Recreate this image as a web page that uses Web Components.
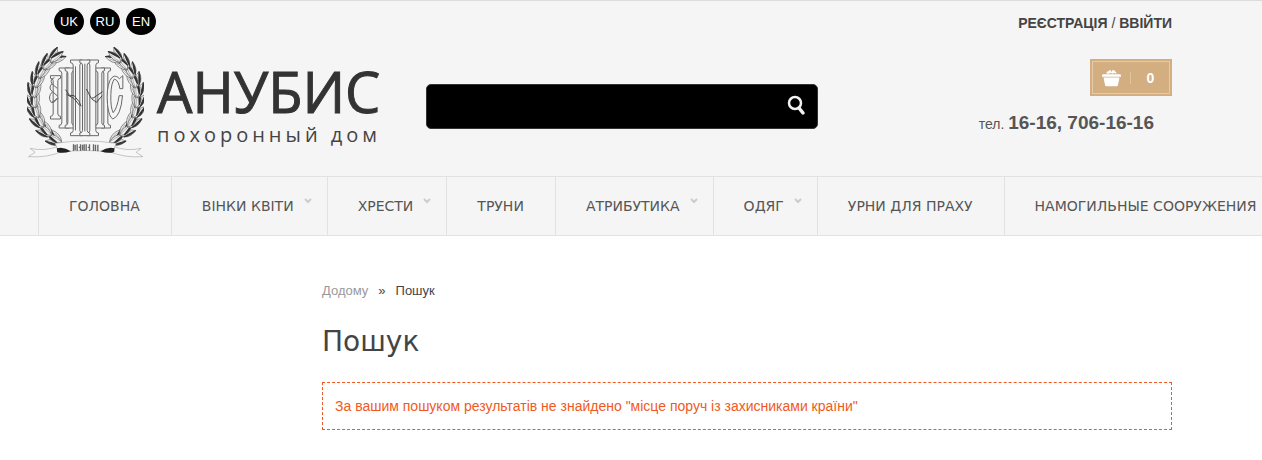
<!DOCTYPE html>
<html lang="uk">
<head>
<meta charset="utf-8">
<meta name="viewport" content="width=device-width, initial-scale=1">
<title>Пошук</title>
<style>
  body {
    margin: 0;
    background: #fff;
    color: #444;
    font: 14px/20px "Liberation Sans", Arial, sans-serif;
    --panel: #f5f5f5;
    --line: #e2e2e2;
    --gold: #d3ae80;
    --accent: #f05a22;
    --menu-font: "DejaVu Sans", Verdana, sans-serif;
  }
</style>
</head>
<body>
<anubis-header>
  <anubis-langs slot="langs"></anubis-langs>
  <anubis-logo slot="logo"></anubis-logo>
  <anubis-search slot="search"></anubis-search>
  <anubis-account slot="account"></anubis-account>
</anubis-header>
<anubis-menu>
  <anubis-menu-item>ГОЛОВНА</anubis-menu-item>
  <anubis-menu-item dropdown>ВІНКИ КВІТИ</anubis-menu-item>
  <anubis-menu-item dropdown>ХРЕСТИ</anubis-menu-item>
  <anubis-menu-item>ТРУНИ</anubis-menu-item>
  <anubis-menu-item dropdown>АТРИБУТИКА</anubis-menu-item>
  <anubis-menu-item dropdown>ОДЯГ</anubis-menu-item>
  <anubis-menu-item>УРНИ ДЛЯ ПРАХУ</anubis-menu-item>
  <anubis-menu-item>НАМОГИЛЬНЫЕ СООРУЖЕНИЯ</anubis-menu-item>
</anubis-menu>
<anubis-page>
  <anubis-crumbs slot="crumbs"></anubis-crumbs>
  <span slot="title">Пошук</span>
  <anubis-alert>За вашим пошуком результатів не знайдено "місце поруч із захисниками країни"</anubis-alert>
</anubis-page>

<script>
const define = (name, html) => {
  customElements.define(name, class extends HTMLElement {
    constructor() {
      super();
      this.attachShadow({ mode: "open" }).innerHTML = html;
    }
  });
};

define("anubis-header", `
  <style>
    :host { display: block; background: var(--panel); border-top: 1px solid #dcdcdc; }
    header {
      display: grid;
      grid-template-columns: 353px minmax(0, 392px) minmax(200px, 1fr);
      column-gap: 46px;
      padding: 7px 90px 17px 27px;
    }
    .brand { display: flex; flex-direction: column; gap: 12px; }
    .search { padding-top: 76px; }
  </style>
  <header>
    <div class="brand"><slot name="langs"></slot><slot name="logo"></slot></div>
    <div class="search"><slot name="search"></slot></div>
    <slot name="account"></slot>
  </header>
`);

define("anubis-langs", `
  <style>
    :host { display: flex; gap: 6px; padding-left: 27px; }
    a {
      width: 30px;
      border-radius: 50%;
      background: #000;
      color: #fff;
      font-size: 13px;
      line-height: 27px;
      text-align: center;
      text-decoration: none;
    }
  </style>
  <a href="#uk">UK</a><a href="#ru">RU</a><a href="#en">EN</a>
`);

// Leaves run along a bezier stem from the ribbon up to the tip
const laurel = () => {
  const p = [[126, 428], [22, 372], [24, 248], [92, 188]];
  const at = (t, k) => {
    const s = 1 - t;
    return s * s * s * p[0][k] + 3 * s * s * t * p[1][k] + 3 * s * t * t * p[2][k] + t * t * t * p[3][k];
  };
  let out = "";
  for (let i = 0; i < 10; i++) {
    const t = i / 9;
    const x = at(t, 0), y = at(t, 1);
    const dir = Math.atan2(at(t + .02, 1) - y, at(t + .02, 0) - x) * 180 / Math.PI;
    for (const side of [-25, 20, 0]) {
      const turn = (dir + side).toFixed(1);
      out += `<g transform="translate(${x.toFixed(1)} ${y.toFixed(1)}) rotate(${turn})">
        <path d="M0 0Q22 -22 50 0Q22 16 0 0Z" fill="#eee" stroke="#666" stroke-width="2"/>
        <path d="M10 -8Q28 -12 50 0Q32 -3 10 -8Z" fill="#222" stroke="#333" stroke-width="3"/>
        <path d="M4 1Q20 3 36 2" fill="none" stroke="#999" stroke-width="2"/></g>`;
    }
  }
  return out;
};

const pillar = (x, y, w, h) => `
  <path d="M${x} ${y}h${w}v8q-7 0 -8 7v${h - 30}q1 7 8 7v8h${-w}v-8q7 0 8 -7v${30 - h}q-1 -7 -8 -7z"/>`;

define("anubis-logo", `
  <style>
    :host { display: block; }
    a { display: flex; gap: 13px; color: #333; text-decoration: none; }
    svg { flex: none; width: 117px; height: 112px; }
    .words { display: flex; flex-direction: column; padding-top: 13px; white-space: nowrap; }
    strong { font: 500 56px/62px "Open Sans", sans-serif; -webkit-text-stroke: 1px #333; }
    small { font: 500 20px/26px "Open Sans", sans-serif; letter-spacing: 4px; color: #444; }
  </style>
  <a href="#home">
    <svg viewBox="22 142 350 336" aria-hidden="true">
      <g>${laurel()}</g>
      <g transform="translate(395 0) scale(-1 1)">${laurel()}</g>
      <g fill="#f5f5f5" stroke="#686868" stroke-width="3" stroke-linejoin="round">
        ${pillar(92, 228, 30, 130)}
        ${pillar(244, 205, 28, 180)}
        ${pillar(226, 205, 28, 180)}
        ${pillar(118, 205, 31, 180)}
        ${pillar(136, 205, 28, 180)}
        ${pillar(152, 181, 36, 227)}
        ${pillar(202, 181, 34, 227)}
        ${pillar(180, 181, 30, 227)}
        <path d="M309 267V228L299 237Q282 219 270 243Q259 270 263 314Q267 352 279 358Q303 350 308 288H298Q292 326 280 339Q272 324 273 285Q274 249 284 238Q297 243 300 267Z"/>
        <path d="M104 234q-15 5 -8 18q-12 14 2 24q-16 16 -4 32q12 3 16 -12M96 252l16 14M98 276l16 14M96 308l20 -13" fill="none"/>
        <path d="M195 192V395M167 200V392" fill="none"/>
        <path d="M137 270l12 17l14 1l15 18l6 14M140 284l22 12l18 22M200 268l14 28l8 -2l26 -18M216 298l14 10l17 -20" fill="none" stroke="#444"/>
      </g>
      <g fill="#f7f7f7" stroke="#aaa" stroke-width="2">
        <path d="M116 440Q74 456 31 446L46 458L26 471Q82 475 128 455Z"/>
        <path d="M279 440Q321 456 364 446L349 458L369 471Q313 475 267 455Z"/>
        <path d="M106 431Q197 417 289 431L278 458Q197 447 117 458Z"/>
      </g>
      <path d="M111 446Q132 440 153 455Q129 463 112 457Z M284 446Q263 440 242 455Q266 463 283 457Z" fill="#222"/>
      <path d="M161 434v20m5 -19v17m6 -18v20m5 -11h5m0 -9v20m6 -19v17m5 -18v19m6 -19v19m5 -10h5m0 -9v19m12 -19v20m6 -19v19m7 -19v20" fill="none" stroke="#666" stroke-width="4"/>
    </svg>
    <span class="words"><strong>АНУБИС</strong><small>похоронный дом</small></span>
  </a>
`);

define("anubis-search", `
  <style>
    :host { display: block; }
    form {
      display: flex;
      height: 45px;
      box-sizing: border-box;
      border: 1px solid #333;
      border-radius: 5px;
      background: #000;
    }
    input {
      flex: 1;
      min-width: 0;
      padding: 0 14px;
      border: 0;
      background: none;
      color: #fff;
      font: inherit;
      outline: 0;
    }
    button { display: flex; padding: 9px 10px; border: 0; background: none; cursor: pointer; }
    svg { width: 22px; height: 22px; }
  </style>
  <form role="search">
    <input type="text" name="search" aria-label="Пошук">
    <button type="button" aria-label="Пошук">
      <svg viewBox="0 0 22 22" fill="none" stroke="#f2f2f2">
        <circle cx="10" cy="9" r="6" stroke-width="2.500"/>
        <path d="M14 14l4 5" stroke-width="3.500" stroke-linecap="round"/>
      </svg>
    </button>
  </form>
`);

define("anubis-account", `
  <style>
    :host { display: flex; flex-direction: column; align-items: flex-end; padding-top: 5px; }
    a { color: inherit; text-decoration: none; }
    .login { font-weight: 700; }
    .login i { font-weight: 400; font-style: normal; }
    .cart {
      display: flex;
      align-items: center;
      box-sizing: border-box;
      width: 82px;
      height: 37px;
      margin-top: 26px;
      padding-left: 12px;
      background: var(--gold);
      outline: 1px solid #e5cba8;
      outline-offset: -3px;
      color: #fff;
      font-weight: 700;
    }
    .cart svg { width: 19px; height: 18px; }
    .cart span { flex: 1; margin-left: 9px; padding-right: 2px; border-left: 1px solid #e0c59f; line-height: 12px; text-align: center; }
    .phone { margin: 16px 18px 0 0; color: #555; line-height: 22px; }
    .phone b { font-size: 19px; }
  </style>
  <div class="login"><a href="#register">РЕЄСТРАЦІЯ</a> <i>/</i> <a href="#login">ВВІЙТИ</a></div>
  <a class="cart" href="#cart">
    <svg viewBox="0 0 19 18" fill="#fff" aria-hidden="true">
      <path d="M0 6.500Q0 5.200 1.500 5.200H17.500Q19 5.200 19 6.500V7.800H0Z"/>
      <path d="M1.500 8.400H17.500L16 16Q15.700 17.300 14.300 17.300H4.700Q3.300 17.300 3 16Z"/>
      <path d="M4.500 4.600Q4 2.500 6.500 2.200Q7 0.800 8.600 1.300L9.300 3L10.500 1.200Q12.300 0.600 12.800 2.200Q15 2.400 14.500 4.600L12 4L10.600 4.700L8.700 3.800L7 4.700Z"/>
    </svg>
    <span>0</span>
  </a>
  <div class="phone">тел. <b>16-16, 706-16-16</b></div>
`);

define("anubis-menu", `
  <style>
    :host { display: block; background: var(--panel); border: solid var(--line); border-width: 1px 0; overflow: hidden; }
    nav { display: flex; padding-left: 38px; }
  </style>
  <nav><slot></slot></nav>
`);

customElements.define("anubis-menu-item", class extends HTMLElement {
  connectedCallback() {
    const arrow = this.hasAttribute("dropdown")
      ? `<svg viewBox="0 0 8 6" fill="none" stroke="#ccc" stroke-width="2"><path d="M1 1l3 3l3 -3"/></svg>`
      : "";
    this.attachShadow({ mode: "open" }).innerHTML = `
      <style>
        :host { display: block; flex: none; position: relative; border-left: 1px solid var(--line); }
        :host([dropdown]) { padding-right: 2px; }
        a {
          display: block;
          padding: 0 31px 0 30px;
          color: #555;
          font: 14px/58px var(--menu-font);
          text-decoration: none;
          white-space: nowrap;
        }
        svg { position: absolute; top: 21px; right: 15px; width: 8px; height: 6px; }
      </style>
      <a href="#"><slot></slot></a>${arrow}
    `;
  }
});

define("anubis-page", `
  <style>
    :host { display: block; padding: 45px 90px 30px 322px; }
    h1 { margin: 21px 0 20px; font: 400 28px/40px var(--menu-font); }
  </style>
  <main>
    <slot name="crumbs"></slot>
    <h1><slot name="title"></slot></h1>
    <slot></slot>
  </main>
`);

define("anubis-crumbs", `
  <style>
    :host { display: block; font-size: 13px; }
    nav { display: flex; gap: 10px; }
    a { color: #999; text-decoration: none; }
  </style>
  <nav><a href="#home">Додому</a><span>»</span><span>Пошук</span></nav>
`);

define("anubis-alert", `
  <style>
    :host { display: block; padding: 13px 12px; border: 1px dashed var(--accent); color: var(--accent); }
  </style>
  <slot></slot>
`);
</script>
</body>
</html>
